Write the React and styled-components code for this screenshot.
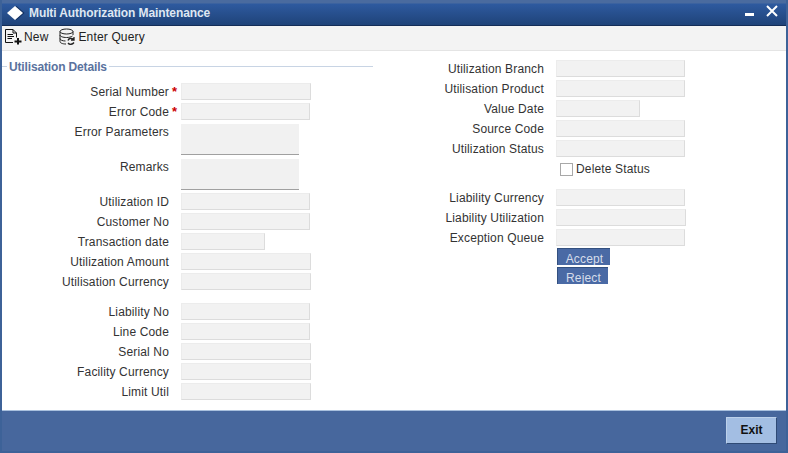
import React from 'react'
import styled, { createGlobalStyle } from 'styled-components'

const leftFields = [
  { label: 'Serial Number', width: 130, required: true },
  { label: 'Error Code', width: 129, required: true },
  { label: 'Error Parameters', area: true, gap: 3 },
  { label: 'Remarks', area: true, gap: 4 },
  { label: 'Utilization ID', width: 129, gap: 1 },
  { label: 'Customer No', width: 129 },
  { label: 'Transaction date', width: 84 },
  { label: 'Utilization Amount', width: 130 },
  { label: 'Utilisation Currency', width: 130 },
  { label: 'Liability No', width: 129, gap: 10 },
  { label: 'Line Code', width: 129 },
  { label: 'Serial No', width: 130 },
  { label: 'Facility Currency', width: 130 },
  { label: 'Limit Util', width: 130 },
]

const rightTop = [
  { label: 'Utilization Branch', width: 129 },
  { label: 'Utilisation Product', width: 129 },
  { label: 'Value Date', width: 84 },
  { label: 'Source Code', width: 129 },
  { label: 'Utilization Status', width: 129 },
]

const rightBottom = [
  { label: 'Liability Currency', width: 129 },
  { label: 'Liability Utilization', width: 130 },
  { label: 'Exception Queue', width: 129 },
]

const NewIcon = () => (
  <svg width="18" height="18" viewBox="0 0 18 18" fill="none" stroke="#111" strokeWidth="1">
    <path d="M1.5 14.5V1.5H9L12.5 5V9.5" />
    <path d="M9 1.5V5H12.5" />
    <path d="M3.5 6.5H9M3.5 8.5H10M3.5 10.5H8" />
    <path d="M1.5 14.5H9" />
    <path d="M14 10V16.5M10.5 13.5H17.5" strokeWidth="2" />
  </svg>
)

const QueryIcon = () => (
  <svg width="18" height="18" viewBox="0 0 18 18" fill="none" stroke="#222" strokeWidth="1">
    <ellipse cx="8.5" cy="3.5" rx="6.5" ry="2.5" />
    <path d="M2 3.5V13.5C2 15 4.5 16 8 16M15 3.5V7" />
    <path d="M2 7C2 8.5 5 9.5 8.5 9.5C11 9.5 13 9 14.5 8M2 10.5C2 12 4.5 13 7.5 13" />
    <path d="M10 12.5C10.5 10.5 13.5 9.5 15.5 11.5M16 9V12H13M10 15C11.5 17 14.5 16.5 16 14.5" strokeWidth="1.3" />
  </svg>
)

const Diamond = () => (
  <svg width="18" height="14" viewBox="0 0 18 14">
    <path d="M9.5 0L17.5 7L9.5 14L2.5 7Z" fill="#0f2c5c" />
    <path d="M8 0L16 7L8 14L0 7Z" fill="#ffffff" />
  </svg>
)

const CloseIcon = () => (
  <svg width="12" height="12" viewBox="0 0 12 12" fill="none" stroke="#ffffff" strokeWidth="2">
    <path d="M1 1L11 11M11 1L1 11" />
  </svg>
)

const Field = ({ label, width, required, area, gap }) => (
  <Row $gap={gap} $area={area}>
    <Label $area={area}>{label}</Label>
    <Star>{required ? '*' : ''}</Star>
    {area ? <TextArea /> : <Input $width={width} />}
  </Row>
)

export default function App() {
  return (
    <>
      <Global />
      <Window>
        <TitleBar>
          <Diamond />
          <Title>Multi Authorization Maintenance</Title>
          <Controls>
            <Minimize />
            <CloseIcon />
          </Controls>
        </TitleBar>
        <Toolbar>
          <ToolButton>
            <NewIcon />
            New
          </ToolButton>
          <ToolButton>
            <QueryIcon />
            Enter Query
          </ToolButton>
        </Toolbar>
        <Body>
          <LeftColumn>
            <Legend>
              <LegendText>Utilisation Details</LegendText>
            </Legend>
            {leftFields.map((f) => (
              <Field key={f.label} {...f} />
            ))}
          </LeftColumn>
          <RightColumn>
            {rightTop.map((f) => (
              <Field key={f.label} {...f} />
            ))}
            <CheckRow>
              <Check />
              Delete Status
            </CheckRow>
            <RightGroup>
              {rightBottom.map((f) => (
                <Field key={f.label} {...f} />
              ))}
            </RightGroup>
            <Actions>
              <ActionButton $width={53}>Accept</ActionButton>
              <ActionButton $width={51}>Reject</ActionButton>
            </Actions>
          </RightColumn>
        </Body>
        <Footer>
          <ExitButton>Exit</ExitButton>
        </Footer>
      </Window>
    </>
  )
}

const Global = createGlobalStyle`
  html, body {
    margin: 0;
    padding: 0;
    background: #ffffff;
  }
  * {
    box-sizing: border-box;
  }
`

const Window = styled.div`
  display: flex;
  flex-direction: column;
  width: 788px;
  height: 453px;
  border-left: 2px solid #3d6298;
  border-right: 2px solid #3d6298;
  font-family: 'Liberation Sans', Arial, sans-serif;
  font-size: 12px;
  letter-spacing: 0.15px;
  color: #333333;
  background: #ffffff;
`

const TitleBar = styled.div`
  display: flex;
  align-items: center;
  gap: 4px;
  height: 26px;
  padding: 1px 0 0 5px;
  background: linear-gradient(#4a6b9f 0, #4a6b9f 3px, #2e5a9f 4px, #1f4379 25px);
  border-bottom: 1px solid #142d57;
`

const Title = styled.div`
  font-size: 12px;
  font-weight: bold;
  letter-spacing: -0.1px;
  color: #dfe7f2;
`

const Controls = styled.div`
  display: flex;
  align-items: flex-start;
  margin-left: auto;
  gap: 12px;
  padding: 4px 8px 0 0;
  height: 100%;
`

const Minimize = styled.div`
  width: 9px;
  height: 3px;
  margin-top: 8px;
  background: #ffffff;
`

const Toolbar = styled.div`
  display: flex;
  align-items: center;
  gap: 10px;
  height: 25px;
  padding: 0 0 3px 2px;
  background: #f3f3f3;
  border-bottom: 1px solid #e4e4e4;
`

const ToolButton = styled.div`
  display: flex;
  align-items: center;
  gap: 2px;
  color: #222222;
  font-size: 12px;
`

const Body = styled.div`
  flex: 1;
  display: flex;
  min-height: 0;
`

const LeftColumn = styled.div`
  width: 371px;
  padding-top: 9px;
`

const Legend = styled.div`
  display: flex;
  align-items: center;
  height: 13px;
  margin-bottom: 8px;
  &::before {
    content: '';
    width: 5px;
    height: 1px;
    background: #c8d4e4;
    margin-right: 2px;
  }
  &::after {
    content: '';
    flex: 1;
    height: 1px;
    background: #c8d4e4;
    margin-left: 2px;
  }
`

const LegendText = styled.div`
  font-size: 12px;
  font-weight: bold;
  letter-spacing: -0.15px;
  color: #5a729e;
`

const Row = styled.div`
  display: flex;
  align-items: ${(p) => (p.$area ? 'flex-start' : 'center')};
  height: ${(p) => (p.$area ? '31px' : '20px')};
  margin-top: ${(p) => (p.$gap ? p.$gap : 0)}px;
`

const Label = styled.div`
  width: 167px;
  text-align: right;
  white-space: nowrap;
  padding-top: ${(p) => (p.$area ? '1px' : '2px')};
`

const Star = styled.div`
  width: 12px;
  padding: 1px 0 0 3px;
  color: #cc0000;
  font-size: 13px;
  font-weight: bold;
`

const Input = styled.div`
  width: ${(p) => p.$width}px;
  height: 17px;
  background: #f2f2f2;
  border-top: 1px solid #ececec;
  border-left: 1px solid #ececec;
  border-right: 1px solid #dcdcdc;
  border-bottom: 1px solid #dcdcdc;
`

const TextArea = styled.div`
  width: 118px;
  height: 31px;
  background: #f1f1f1;
  border-bottom: 1px solid #a0a0a0;
`

const RightColumn = styled.div`
  width: 413px;
  padding: 7px 0 0 4px;
`

const CheckRow = styled.div`
  display: flex;
  align-items: center;
  gap: 3px;
  height: 20px;
  margin-top: 1px;
  padding-left: 183px;
  color: #333333;
`

const Check = styled.div`
  width: 13px;
  height: 13px;
  background: #ffffff;
  border: 1px solid #a8a8a8;
`

const RightGroup = styled.div`
  margin-top: 8px;
`

const Actions = styled.div`
  display: flex;
  flex-direction: column;
  gap: 2px;
  padding-left: 180px;
  margin-top: 1px;
`

const ActionButton = styled.div`
  width: ${(p) => p.$width}px;
  height: 17px;
  padding-left: 1px;
  background: #4a6aa5;
  border-top: 1px solid #33507f;
  border-left: 1px solid #33507f;
  color: #d5dcea;
  text-align: center;
  line-height: 20px;
  overflow: hidden;
`

const Footer = styled.div`
  display: flex;
  justify-content: flex-end;
  height: 43px;
  padding: 6px 9px 0 0;
  background: #47679d;
  border-top: 1px solid #a9c0de;
  border-bottom: 2px solid #3d6298;
`

const ExitButton = styled.div`
  width: 51px;
  height: 27px;
  background: #a3bee3;
  border-top: 1px solid #bcd0ea;
  border-left: 1px solid #bcd0ea;
  border-right: 1px solid #2f4a75;
  border-bottom: 1px solid #2f4a75;
  color: #111111;
  font-size: 12px;
  font-weight: bold;
  letter-spacing: 0;
  text-align: center;
  line-height: 25px;
`
